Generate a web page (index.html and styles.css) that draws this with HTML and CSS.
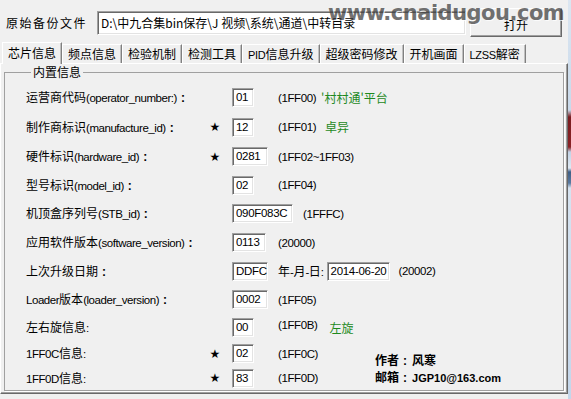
FILE: index.html
```html
<!DOCTYPE html>
<html lang="zh-CN">
<head>
<meta charset="utf-8">
<title>芯片信息</title>
<link rel="stylesheet" href="styles.css">
</head>
<body>
<div class="win">
  <div class="top">
    <span class="file-label">原始备份文件</span>
    <div class="path">D:\中九合集bin保存\J 视频\系统\通道\中转目录</div>
    <div class="open-btn">打开</div>
  </div>
  <div class="watermark">www.cnaidugou.com</div>
  <div class="tabs">
    <div class="tab active">芯片信息</div>
    <div class="tab">频点信息</div>
    <div class="tab">检验机制</div>
    <div class="tab">检测工具</div>
    <div class="tab"><span class="en">PID</span>信息升级</div>
    <div class="tab">超级密码修改</div>
    <div class="tab">开机画面</div>
    <div class="tab"><span class="en">LZSS</span>解密</div>
  </div>
  <div class="panel">
    <fieldset class="group">
      <legend>内置信息</legend>
      <div class="rows">
        <div class="row h29">
          <span class="lab">运营商代码<span class="en">(operator_number:)</span><span class="colon">:</span></span>
          <span class="star"></span>
          <span class="slot"><span class="edit w22">01</span></span>
          <span class="code">(1FF00)</span>
          <span class="note n1">'村村通'平台</span>
        </div>
        <div class="row h30">
          <span class="lab">制作商标识<span class="en">(manufacture_id)</span><span class="colon">:</span></span>
          <span class="star">★</span>
          <span class="slot"><span class="edit w22">12</span></span>
          <span class="code">(1FF01)</span>
          <span class="note n2">卓异</span>
        </div>
        <div class="row h29">
          <span class="lab">硬件标识<span class="en">(hardware_id)</span><span class="colon">:</span></span>
          <span class="star">★</span>
          <span class="slot"><span class="edit w36">0281</span></span>
          <span class="code">(1FF02~1FF03)</span>
        </div>
        <div class="row h28">
          <span class="lab">型号标识<span class="en">(model_id)</span><span class="colon">:</span></span>
          <span class="star"></span>
          <span class="slot"><span class="edit w22">02</span></span>
          <span class="code">(1FF04)</span>
        </div>
        <div class="row h29">
          <span class="lab">机顶盒序列号<span class="en">(STB_id)</span><span class="colon">:</span></span>
          <span class="star"></span>
          <span class="slot wide"><span class="edit w61">090F083C</span></span>
          <span class="code">(1FFFC)</span>
        </div>
        <div class="row h29">
          <span class="lab">应用软件版本<span class="en">(software_version)</span><span class="colon">:</span></span>
          <span class="star"></span>
          <span class="slot"><span class="edit w34">0113</span></span>
          <span class="code">(20000)</span>
        </div>
        <div class="row h28">
          <span class="lab">上次升级日期<span class="colon">:</span></span>
          <span class="star"></span>
          <span class="slot"><span class="edit w36">DDFC</span></span>
          <span class="ymd">年<span class="en">-</span>月<span class="en">-</span>日<span class="en">:</span></span>
          <span class="edit w63 date">2014-06-20</span>
          <span class="code after-date">(20002)</span>
        </div>
        <div class="row h29">
          <span class="lab"><span class="en">Loader</span>版本<span class="en">(loader_version)</span><span class="colon">:</span></span>
          <span class="star"></span>
          <span class="slot"><span class="edit w36">0002</span></span>
          <span class="code">(1FF05)</span>
        </div>
        <div class="row h27">
          <span class="lab">左右旋信息<span class="en">:</span></span>
          <span class="star"></span>
          <span class="slot"><span class="edit w22">00</span></span>
          <span class="code hi">(1FF0B)</span>
          <span class="note n3">左旋</span>
        </div>
        <div class="tail">
          <div class="tail-rows">
            <div class="row h25">
              <span class="lab"><span class="en">1FF0C</span>信息<span class="en">:</span></span>
              <span class="star">★</span>
              <span class="slot"><span class="edit w22">02</span></span>
              <span class="code">(1FF0C)</span>
            </div>
            <div class="row h24">
              <span class="lab"><span class="en">1FF0D</span>信息<span class="en">:</span></span>
              <span class="star">★</span>
              <span class="slot"><span class="edit w22">83</span></span>
              <span class="code">(1FF0D)</span>
            </div>
          </div>
          <div class="author">
            <div>作者<span class="sep">:</span>风寒</div>
            <div>邮箱<span class="sep">:</span><span class="mail">JGP10@163.com</span></div>
          </div>
        </div>
      </div>
    </fieldset>
  </div>
</div>
<div class="strip"></div>
</body>
</html>
```

FILE: styles.css
```css
html, body {
  margin: 0;
  padding: 0;
}
body {
  width: 571px;
  height: 399px;
  overflow: hidden;
  background: #f0f0f0;
  display: flex;
  font-family: "Noto Sans CJK SC", "Liberation Sans", sans-serif;
  font-size: 12px;
  color: #000;
}
.win {
  width: 568px;
  position: relative;
  flex-shrink: 0;
}
.strip {
  width: 3px;
  background: linear-gradient(to bottom, #dbe6f1 0px, #c9d9ea 110px, #7a1d20 117px, #8b2326 147px, #c2d3e6 152px, #dfe9f3 168px, #3f5f86 172px, #5a7aa0 183px, #d6e3f0 188px, #c4d6ea 399px);
}
.en {
  font-family: "Liberation Sans", sans-serif;
  font-size: 11.5px;
  letter-spacing: -0.45px;
}

/* top bar */
.top {
  height: 42px;
  display: flex;
  align-items: flex-start;
}
.file-label {
  margin: 15px 0 0 6px;
  line-height: 16px;
  letter-spacing: 1.5px;
}
.path {
  margin: 11px 0 0 10px;
  width: 369px;
  height: 24px;
  box-sizing: border-box;
  background: #fff;
  border: 1px solid;
  border-color: #a0a0a0 #fff #fff #a0a0a0;
  box-shadow: inset 1px 1px 0 #696969, inset -1px -1px 0 #e3e3e3;
  padding: 2px 0 0 3px;
  line-height: 18px;
  white-space: nowrap;
  overflow: hidden;
}
.open-btn {
  margin: 8px 0 0 4px;
  width: 92px;
  height: 29px;
  box-sizing: border-box;
  border: 1px solid;
  border-color: #fff #696969 #696969 #fff;
  box-shadow: inset -1px -1px 0 #a0a0a0;
  display: flex;
  align-items: center;
  justify-content: center;
  padding-top: 4px;
}
.watermark {
  position: absolute;
  left: 328px;
  top: 1px;
  font-family: "DejaVu Sans", sans-serif;
  font-weight: bold;
  font-size: 21px;
  letter-spacing: -0.5px;
  color: #444;
  opacity: 0.75;
  text-shadow: 1px 1px 0 #fff;
  white-space: nowrap;
}

/* tabs */
.tabs {
  height: 21px;
  display: flex;
  align-items: flex-end;
  padding-left: 2px;
  position: relative;
  z-index: 1;
}
.tab {
  height: 19px;
  box-sizing: border-box;
  padding: 0 5px;
  line-height: 17px;
  border-top: 1px solid #fff;
  border-left: 1px solid #fff;
  border-right: 1px solid #808080;
  box-shadow: inset -1px 0 0 #c0c0c0;
  white-space: nowrap;
}
.tab .en {
  font-size: 11px;
  letter-spacing: -0.3px;
}
.tab.active {
  height: 22px;
  margin-bottom: -1px;
  background: #f0f0f0;
  line-height: 19px;
}

/* panel */
.panel {
  border: 1px solid;
  border-color: #fff #696969 #696969 #fff;
  box-shadow: inset -1px -1px 0 #a0a0a0;
  padding: 0 3px 2px 3px;
}
.group {
  margin: 0;
  padding: 3px 0 0 21px;
  border: 1px solid #a0a0a0;
  box-shadow: 1px 1px 0 #fff;
  min-width: 0;
}
.group legend {
  padding: 0 2px;
  margin-left: 5px;
  line-height: 16px;
  font-size: 12px;
}
.rows {
  display: flex;
  flex-direction: column;
}
.row {
  display: flex;
  align-items: center;
  line-height: 16px;
  white-space: nowrap;
}
.h24 { height: 24px; }
.h25 { height: 25px; }
.h27 { height: 27px; }
.h28 { height: 28px; }
.h29 { height: 29px; }
.h30 { height: 30px; }

.lab {
  width: 180px;
  flex-shrink: 0;
}
.colon {
  font-family: "Liberation Sans", sans-serif;
  font-weight: bold;
  font-size: 12px;
  margin-left: 4px;
}
.star {
  width: 18px;
  flex-shrink: 0;
  text-align: center;
  font-family: "DejaVu Sans", sans-serif;
  font-size: 12px;
}
.slot {
  width: 46px;
  margin-left: 8px;
  flex-shrink: 0;
  display: flex;
}
.slot.wide {
  width: 71px;
}
.edit {
  height: 19px;
  box-sizing: border-box;
  background: #fff;
  border: 1px solid;
  border-color: #a0a0a0 #fff #fff #a0a0a0;
  box-shadow: inset 1px 1px 0 #696969, inset -1px -1px 0 #e3e3e3;
  font-family: "Liberation Sans", sans-serif;
  font-size: 11.5px;
  letter-spacing: -0.3px;
  line-height: 15px;
  padding: 1px 0 0 3px;
  flex-shrink: 0;
}
.w22 { width: 22px; }
.w34 { width: 34px; }
.w36 { width: 36px; }
.w61 { width: 61px; }
.w63 { width: 63px; }

.code {
  font-family: "Liberation Sans", sans-serif;
  font-size: 11.5px;
  letter-spacing: -0.4px;
}
.code.hi {
  margin-bottom: 6px;
}
.note {
  color: #1e8a1e;
}
.n1 { margin-left: 5px; }
.n2 { margin-left: 9px; }
.n3 { margin-left: 12px; }

.ymd {
  flex-shrink: 0;
}
.date {
  margin-left: 3px;
}
.after-date {
  margin-left: 9px;
}

.tail {
  display: flex;
  align-items: flex-end;
}
.tail-rows {
  width: 349px;
  flex-shrink: 0;
}
.author {
  font-weight: bold;
  line-height: 15px;
  margin-bottom: 4px;
  white-space: nowrap;
}
.author .sep {
  font-family: "Liberation Sans", sans-serif;
  margin: 0 5px 0 4px;
}
.author .mail {
  font-family: "Liberation Sans", sans-serif;
  font-size: 11px;
}
```
